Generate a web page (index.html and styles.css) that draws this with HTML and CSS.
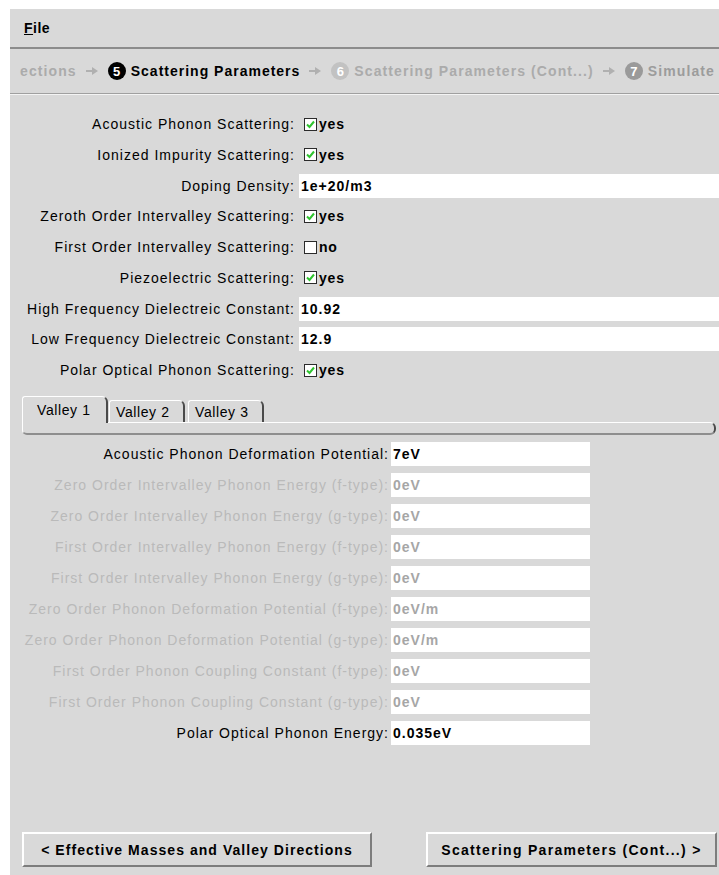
FILE: index.html
```html
<!DOCTYPE html>
<html lang="en">
<head>
<meta charset="utf-8">
<title>Scattering Parameters</title>
<link rel="stylesheet" href="styles.css">
</head>
<body>
<div class="window">
  <div class="menubar"><span class="menu"><u>F</u>ile</span></div>

  <div class="crumbs">
    <span class="crumb">ections</span>
    <svg class="arrow" viewBox="0 0 12 10"><path d="M0 5H7" stroke="currentColor" stroke-width="2"/><path d="M6 1L12 5L6 9Z" fill="currentColor"/></svg>
    <span class="step current"><span class="num">5</span>Scattering Parameters</span>
    <svg class="arrow" viewBox="0 0 12 10"><path d="M0 5H7" stroke="currentColor" stroke-width="2"/><path d="M6 1L12 5L6 9Z" fill="currentColor"/></svg>
    <span class="step next"><span class="num">6</span>Scattering Parameters (Cont...)</span>
    <svg class="arrow" viewBox="0 0 12 10"><path d="M0 5H7" stroke="currentColor" stroke-width="2"/><path d="M6 1L12 5L6 9Z" fill="currentColor"/></svg>
    <span class="step later"><span class="num">7</span>Simulate</span>
  </div>

  <div class="form">
    <div class="label">Acoustic Phonon Scattering:</div>
    <div class="check"><svg class="box" viewBox="0 0 13 13"><rect x="0.5" y="0.5" width="12" height="12" fill="#fff" stroke="#2b2b2b"/><path d="M3 6.5L5.5 9L10 3.5" fill="none" stroke="#2fc42f" stroke-width="2"/></svg><b>yes</b></div>

    <div class="label">Ionized Impurity Scattering:</div>
    <div class="check"><svg class="box" viewBox="0 0 13 13"><rect x="0.5" y="0.5" width="12" height="12" fill="#fff" stroke="#2b2b2b"/><path d="M3 6.5L5.5 9L10 3.5" fill="none" stroke="#2fc42f" stroke-width="2"/></svg><b>yes</b></div>

    <div class="label">Doping Density:</div>
    <div class="field">1e+20/m3</div>

    <div class="label">Zeroth Order Intervalley Scattering:</div>
    <div class="check"><svg class="box" viewBox="0 0 13 13"><rect x="0.5" y="0.5" width="12" height="12" fill="#fff" stroke="#2b2b2b"/><path d="M3 6.5L5.5 9L10 3.5" fill="none" stroke="#2fc42f" stroke-width="2"/></svg><b>yes</b></div>

    <div class="label">First Order Intervalley Scattering:</div>
    <div class="check"><svg class="box" viewBox="0 0 13 13"><rect x="0.5" y="0.5" width="12" height="12" fill="#fff" stroke="#2b2b2b"/></svg><b>no</b></div>

    <div class="label">Piezoelectric Scattering:</div>
    <div class="check"><svg class="box" viewBox="0 0 13 13"><rect x="0.5" y="0.5" width="12" height="12" fill="#fff" stroke="#2b2b2b"/><path d="M3 6.5L5.5 9L10 3.5" fill="none" stroke="#2fc42f" stroke-width="2"/></svg><b>yes</b></div>

    <div class="label">High Frequency Dielectreic Constant:</div>
    <div class="field">10.92</div>

    <div class="label">Low Frequency Dielectreic Constant:</div>
    <div class="field">12.9</div>

    <div class="label">Polar Optical Phonon Scattering:</div>
    <div class="check"><svg class="box" viewBox="0 0 13 13"><rect x="0.5" y="0.5" width="12" height="12" fill="#fff" stroke="#2b2b2b"/><path d="M3 6.5L5.5 9L10 3.5" fill="none" stroke="#2fc42f" stroke-width="2"/></svg><b>yes</b></div>
  </div>

  <div class="notebook">
    <div class="tabs">
      <div class="tab active">Valley 1</div>
      <div class="tab">Valley 2</div>
      <div class="tab">Valley 3</div>
    </div>
    <div class="tabpanel"></div>
  </div>

  <div class="valley-form">
    <div class="label">Acoustic Phonon Deformation Potential:</div>
    <div class="field">7eV</div>

    <div class="label disabled">Zero Order Intervalley Phonon Energy (f-type):</div>
    <div class="field disabled">0eV</div>

    <div class="label disabled">Zero Order Intervalley Phonon Energy (g-type):</div>
    <div class="field disabled">0eV</div>

    <div class="label disabled">First Order Intervalley Phonon Energy (f-type):</div>
    <div class="field disabled">0eV</div>

    <div class="label disabled">First Order Intervalley Phonon Energy (g-type):</div>
    <div class="field disabled">0eV</div>

    <div class="label disabled">Zero Order Phonon Deformation Potential (f-type):</div>
    <div class="field disabled">0eV/m</div>

    <div class="label disabled">Zero Order Phonon Deformation Potential (g-type):</div>
    <div class="field disabled">0eV/m</div>

    <div class="label disabled">First Order Phonon Coupling Constant (f-type):</div>
    <div class="field disabled">0eV</div>

    <div class="label disabled">First Order Phonon Coupling Constant (g-type):</div>
    <div class="field disabled">0eV</div>

    <div class="label">Polar Optical Phonon Energy:</div>
    <div class="field">0.035eV</div>
  </div>

  <div class="nav">
    <button class="btn prev">&lt; Effective Masses and Valley Directions</button>
    <button class="btn next">Scattering Parameters (Cont...) &gt;</button>
  </div>
</div>
</body>
</html>
```

FILE: styles.css
```css
html, body {
  margin: 0;
  padding: 0;
  background: #fff;
  overflow: hidden;
}

body {
  font-family: "Liberation Sans", Arial, sans-serif;
  font-size: 14px;
  color: #000;
}

.window {
  margin: 9px 0 0 10px;
  width: 709px;
  height: 866px;
  background: #d9d9d9;
  display: flex;
  flex-direction: column;
  overflow: hidden;
}

/* menu bar */
.menubar {
  height: 38px;
  flex: none;
  border-bottom: 2px solid #8c8c8c;
  display: flex;
  align-items: center;
  padding-left: 14px;
}

.menu {
  font-weight: bold;
  letter-spacing: 0.5px;
}

/* wizard steps strip */
.crumbs {
  height: 44px;
  flex: none;
  border-bottom: 1px solid #a0a0a0;
  box-shadow: 0 1px 0 #f4f4f4;
  display: flex;
  align-items: center;
  padding-left: 10px;
  white-space: nowrap;
  font-weight: bold;
  letter-spacing: 1.1px;
  color: #ababab;
}

.arrow {
  width: 12px;
  height: 10px;
  flex: none;
  margin: 0 10px 0 9px;
  color: #b0b0b0;
}

.step {
  display: flex;
  align-items: center;
}

.num {
  width: 18px;
  height: 18px;
  border-radius: 50%;
  display: inline-flex;
  align-items: center;
  justify-content: center;
  margin-right: 5px;
  font-size: 13px;
  letter-spacing: 0;
  color: #fff;
  background: #c2c2c2;
}

.step.current {
  color: #000;
  letter-spacing: 1px;
}

.step.current .num {
  background: #000;
}

.step.later {
  color: #9c9c9c;
}

.step.later .num {
  background: #9a9a9a;
}

/* top form */
.form {
  display: grid;
  grid-template-columns: 285px 1fr;
  column-gap: 4px;
  row-gap: 6.75px;
  grid-auto-rows: 24px;
  padding-top: 18px;
  flex: none;
}

.label {
  text-align: right;
  align-self: center;
  white-space: nowrap;
  letter-spacing: 1px;
}

.label.disabled {
  color: #bababa;
}

.check {
  display: flex;
  align-items: center;
  padding-left: 5px;
}

.check b {
  letter-spacing: 0.8px;
}

.box {
  width: 13px;
  height: 13px;
  margin-right: 2px;
  flex: none;
}

.field {
  background: #fff;
  display: flex;
  align-items: center;
  padding-left: 2px;
  font-weight: bold;
  letter-spacing: 1px;
}

.field.disabled {
  color: #a6a6a6;
}

/* notebook with valley tabs */
.notebook {
  margin-top: 14px;
  padding: 0 3px 0 12px;
  flex: none;
}

.tabs {
  display: flex;
  align-items: flex-end;
  height: 26px;
  position: relative;
  z-index: 1;
}

.tab {
  box-sizing: border-box;
  height: 22px;
  border-top: 1px solid #fff;
  border-left: 1px solid #fff;
  border-right: 2px solid #4a4a4a;
  border-radius: 3px 6px 0 0;
  padding-left: 6px;
  display: flex;
  align-items: center;
  letter-spacing: 0.6px;
  margin-right: 3px;
  width: 76px;
}

.tab.active {
  height: 27px;
  width: 86px;
  padding-left: 14px;
  margin-bottom: -1px;
  margin-right: 1px;
  background: #d9d9d9;
}

.tabpanel {
  box-sizing: border-box;
  height: 13px;
  border-top: 1px solid #fff;
  border-left: 1px solid #fff;
  border-bottom: 2px solid #8e8e8e;
  border-right: 2px solid #4a4a4a;
  border-radius: 0 6px 6px 5px;
}

/* valley parameters */
.valley-form {
  display: grid;
  grid-template-columns: 379px 199px;
  column-gap: 2px;
  row-gap: 7px;
  grid-auto-rows: 24px;
  padding-top: 7px;
  flex: none;
}

/* navigation buttons */
.nav {
  margin-top: auto;
  display: flex;
  justify-content: space-between;
  padding: 0 2px 8px 12px;
}

.btn {
  box-sizing: border-box;
  height: 35px;
  background: #d9d9d9;
  border-style: solid;
  border-width: 2px;
  border-color: #fff #7d7d7d #7d7d7d #fff;
  font-family: "Liberation Sans", Arial, sans-serif;
  font-size: 14px;
  font-weight: bold;
  letter-spacing: 1.05px;
  color: #000;
  padding: 0;
}

.btn.prev {
  width: 350px;
}

.btn.next {
  width: 291px;
  letter-spacing: 1.3px;
}
```
